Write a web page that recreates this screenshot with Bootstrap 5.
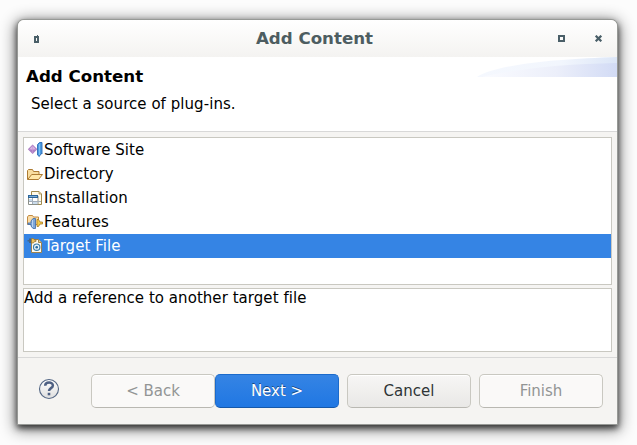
<!DOCTYPE html>
<html lang="en">
<head>
<meta charset="utf-8">
<title>Add Content</title>
<link href="https://cdn.jsdelivr.net/npm/bootstrap@5.3.0/dist/css/bootstrap.min.css" rel="stylesheet">
<style>
body{background:#fcfcfc;font:16.67px/24px "DejaVu Sans Condensed","DejaVu Sans",sans-serif;font-stretch:condensed;letter-spacing:.06px;color:#000;height:445px;overflow:hidden;padding:20px 20px 0 18px}
.dialog{width:599px;height:404px;background:#f5f4f2;border-radius:6px 6px 0 0;box-shadow:0 0 0 1px #979996,0 3px 6px 1px rgba(0,0,0,.7),0 3px 15px 3px rgba(0,0,0,.48)}
.titlebar{height:37px;background:linear-gradient(#fff,#f4f3f1);border-radius:6px 6px 0 0;padding:0 14px 0 16px}
.titlebar h1,.banner h2{font-family:"DejaVu Sans",sans-serif;font-stretch:normal;font-size:16.67px;font-weight:700;letter-spacing:0}
.titlebar h1{color:#4d5d61;padding-left:31px}
.maximize{margin-right:29px}
.banner{height:75px;border-bottom:1px solid #d8d8d8;padding-left:8px}
.banner h2{line-height:20px;padding-top:10px}
.banner p{line-height:20px;padding:7px 0 0 5px}
.swoosh{top:0;right:0}
.content-area{padding:5px 5px 0}
.sources{height:148px;border:1px solid #c9c8c1;background:#fff}
.sources .list-group-item{height:24px;padding:0 0 0 3px;line-height:24px;border:0;color:#000;background:#fff}
.sources .list-group-item.active{background:#3584e4;color:#fff;margin:0}
.sources svg{width:16px;height:16px;flex:none;margin-right:1px}
.details{height:64px;margin-top:3px;border:1px solid #c9c8c1;background:#fff;line-height:18px}
.actions{height:67px;margin-top:5px;border-top:1px solid #d8d8d8;padding:0 14px 0 20px}
.actions .btn{width:124px;height:34px;font-size:16.67px;line-height:32px;padding:0;border:1px solid #c9c8c1;border-radius:5px;opacity:1}
.actions .btn:disabled{background:#faf9f8;color:#929595}
.actions .btn-light{background:linear-gradient(#f7f6f5,#e9e8e6);color:#2e3436;border-bottom-color:#b9b8b2;box-shadow:inset 0 1px #fff}
.actions .btn-primary{background:linear-gradient(#3584e4,#2077e3);border-color:#1b6acb;border-bottom-color:#1558aa;color:#fff;text-shadow:0 -1px rgba(0,0,0,.45)}
.help{margin-bottom:4px}
</style>
</head>
<body>
<main class="dialog d-flex flex-column">
<header class="titlebar d-flex align-items-center">
<svg width="6" height="8" shape-rendering="crispEdges"><path fill="#4a5f68" fill-rule="evenodd" d="M0 1h3V0h1v1h1v7H0zM2 3v3h1V3z"/></svg>
<h1 class="flex-grow-1 text-center mb-0">Add Content</h1>
<svg class="maximize" width="7" height="7" shape-rendering="crispEdges"><path fill="#4a5f68" fill-rule="evenodd" d="M0 0h7v7H0zM2 2v3h3V2z"/></svg>
<svg width="9" height="7"><path d="M1.700.7l5.600 5.600M7.300.7L1.700 6.300" stroke="#4a5f68" stroke-width="2.200"/></svg>
</header>
<section class="banner bg-white position-relative">
<svg class="swoosh position-absolute" width="140" height="20"><defs><linearGradient id="g"><stop stop-color="#fafbff"/><stop offset=".55" stop-color="#eceffa"/><stop offset="1" stop-color="#d2dbf5"/></linearGradient><linearGradient id="h"><stop stop-color="#f5f8fe"/><stop offset=".6" stop-color="#f2f6fd"/><stop offset="1" stop-color="#dce6f7"/></linearGradient></defs><path fill="url(#h)" d="M0 20C20 7 80 2 140 0V20z"/><path fill="url(#g)" d="M5 20C40 12 85 7 140 6V20z"/></svg>
<h2 class="mb-0">Add Content</h2>
<p class="mb-0">Select a source of plug-ins.</p>
</section>
<section class="content-area">
<div class="sources list-group list-group-flush rounded-0">
<div class="list-group-item d-flex align-items-center"><svg viewBox="0 0 16 16"><path d="M.8 7.300L5.600 2.500l4.800 4.800-4.800 4.800z" fill="#ad7fc4"/><path d="M2.800 6.700l2.800-3 2.800 3-2.800 1.500z" fill="#dab7e3"/><path d="M1.500 7.500h8.200M5.600 3.500v8" stroke="#c596d3" stroke-width=".7"/><path d="M10.500 2.500L12.500.5H15V12l-1-.5-1.700 3-1.800-1.500z" fill="#4d9be0" stroke="#2a6cb8" stroke-width=".9"/><path d="M12.500 2v11" stroke="#7dc0f4"/></svg>Software Site</div>
<div class="list-group-item d-flex align-items-center"><svg viewBox="0 0 16 16"><path d="M.5 13.500v-9l1-1h4l1 2h5.500v3" fill="#f8dda0" stroke="#ad7b32"/><path d="M.7 13.500l4-5h10.800l-4 5z" fill="#ffe7a9" stroke="#ad7b32"/></svg>Directory</div>
<div class="list-group-item d-flex align-items-center"><svg viewBox="0 0 16 16"><path d="M4.500 1.500h7.500l2.500 2.500v10.500h-10z" fill="#fffbea" stroke="#a08a4e"/><path d="M12 1.500V4h2.500" fill="#ead69e" stroke="#a08a4e" stroke-width=".7"/><path d="M1.500 6h9.500v8.500H1.500z" fill="#fff" stroke="#8b8f88"/><path d="M1 5h10v3H1z" fill="#2a6499"/><path d="M2 6.500h8" stroke="#79acd5"/><path d="M2 11.500h12M5.500 8v6" stroke="#a3adb9"/><path d="M2 9h3v2H2zM6 12h4v2H6z" fill="#cadcec"/></svg>Installation</div>
<div class="list-group-item d-flex align-items-center"><svg viewBox="0 0 16 16"><path d="M.5 10.500v-7.500l1-1.500h4l1 1.500h5v7.500z" fill="#fbdda8" stroke="#c28b42"/><path d="M1 9h3V7l2-2.500h2.500v10H6L4 12v-1.500H1z" fill="#7ea7d8" stroke="#4874ae" stroke-width=".9"/><path d="M5.500 6v7" stroke="#b9d2ef"/><path d="M10 5.500h1.500L13 8h2.500v2H13l-1.500 2.500H10z" fill="#f3cb4e" stroke="#a77b24" stroke-width=".8"/></svg>Features</div>
<div class="list-group-item active d-flex align-items-center"><svg viewBox="0 0 16 16"><path d="M4.500 1.500h7l3 3v10h-10z" fill="#fffaf0" stroke="#9b8250"/><path d="M11.500 1.500v3h3" fill="#eacf89" stroke="#9b8250"/><path d="M.5 2H2V.5h2V5H2V3.500H.5z" fill="#42658a"/><path d="M4.500.5h2l1 1.500H9v1.500H7.500L6.500 5h-2z" fill="#edc05c" stroke="#93712f" stroke-width=".7"/><circle cx="9.700" cy="9.200" r="3.200" fill="#e8f3fa" stroke="#397ba8" stroke-width="1.100"/><circle cx="9.700" cy="9.200" r="1.300" fill="#27699c"/></svg>Target File</div>
</div>
<div class="details">Add a reference to another target file</div>
</section>
<footer class="actions d-flex align-items-center">
<svg class="help" width="22" height="22" viewBox="0 0 22 22"><defs><linearGradient id="q" x2="0" y2="1"><stop stop-color="#fff"/><stop offset="1" stop-color="#dedede"/></linearGradient></defs><circle cx="11" cy="11" r="9.500" fill="url(#q)" stroke="#536684" stroke-width="1.100"/><path d="M7.200 7.800c0-4.500 7.700-4.300 7.700-.4 0 2.800-3.900 2.700-3.900 5.700" fill="none" stroke="#4e6083" stroke-width="2.500"/><path d="M9.700 14.800h2.600v2.500H9.700z" fill="#4e6083"/></svg>
<div class="d-flex ms-auto"><button class="btn btn-light" disabled>&lt; Back</button><button class="btn btn-primary">Next &gt;</button></div>
<button class="btn btn-light ms-2">Cancel</button><button class="btn btn-light ms-2" disabled>Finish</button>
</footer>
</main>
<script src="https://cdn.jsdelivr.net/npm/bootstrap@5.3.0/dist/js/bootstrap.bundle.min.js"></script>
</body>
</html>
